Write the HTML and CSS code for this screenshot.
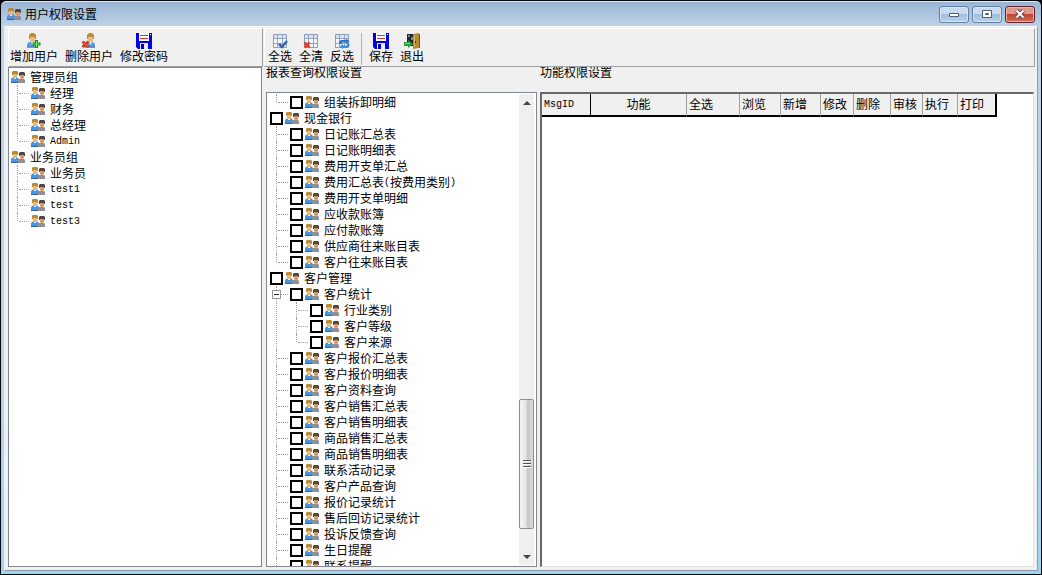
FILE: index.html
```html
<!DOCTYPE html>
<html lang="zh-CN">
<head>
<meta charset="utf-8">
<title>用户权限设置</title>
<link rel="stylesheet" href="styles.css">
</head>
<body>
<svg class="sprite" aria-hidden="true">
  <symbol id="users" viewBox="0 0 14 12">
    <path d="M0 11.500V8l1.500-1.500h5L8 8v3.500z" fill="#4c94dc"/>
    <path d="M0 11.500h7" stroke="#2b62b0"/>
    <path d="M3 7h2v1H3z" fill="#e8f2fc"/>
    <path d="M2 2h4v4L5 7H3L2 6z" fill="#e9b67c"/>
    <path d="M1 4V1l1-1h4l1 1v3H6V3H2v1z" fill="#b88a34"/>
    <path d="M7 12V9l1-1h5l1 1v3z" fill="#909094"/>
    <path d="M10 8h1v2h-1z" fill="#e07848"/>
    <path d="M9 4h4v3l-1 1h-2L9 7z" fill="#d89868"/>
    <path d="M8 5V2l1-1h4l1 1v3h-1V4H9v1z" fill="#54463e"/>
  </symbol>
  <symbol id="person" viewBox="0 0 16 16">
    <path d="M1 14v-3l2-2h6l2 2v3.500H1.500z" fill="#5c9fdf"/>
    <path d="M1 14h10" stroke="#3a6fb8"/>
    <path d="M5 9h3l-1.500 3z" fill="#e4f0fb"/>
    <path d="M4 3h5v5L8 9H5L4 8z" fill="#eab987"/>
    <path d="M3 6V2l2-2h3l2 2v4H9V4H4v2z" fill="#bd8c34"/>
  </symbol>
  <symbol id="user-add" viewBox="0 0 16 16">
    <use href="#person"/>
    <path d="M9 7h3v2.500h2.500v3H12V15H9v-2.500H6.500v-3H9z" fill="#168a1c"/>
    <path d="M10 8h1v2.500h2.500v1H11V14h-1v-2.500H7.500v-1H10z" fill="#74ee54"/>
  </symbol>
  <symbol id="user-del" viewBox="0 0 16 16">
    <use href="#person" x="3"/>
    <path d="M1.500 8.500l6 5.500M7.500 8.500L1.500 14" stroke="#cc3a26" stroke-width="3"/>
    <path d="M2 9l5 4.500" stroke="#ec6a54"/>
  </symbol>
  <symbol id="disk" viewBox="0 0 16 16">
    <path d="M0 0h16v16H2l-2-2z" fill="#0000e4"/>
    <path d="M3 0h10v8H3z" fill="#fff"/>
    <path d="M4 2.500h8M4 5.500h8" stroke="#e03030"/>
    <path d="M4 10h8v6H4z" fill="#e8e8f4"/>
    <path d="M5 11h3v5H5z" fill="#0000b4"/>
    <path d="M14 1h1v1h-1z" fill="#fff"/>
  </symbol>
  <symbol id="sheet" viewBox="0 0 16 16">
    <path d="M1.500 1.500h13v13h-13z" fill="#f4f7fc" stroke="#8d9cba"/>
    <path d="M2 2h12v3H2z" fill="#d9e2f1"/>
    <path d="M5.500 1v14M10.500 1v14M1 5.500h14M1 10.500h14" stroke="#98a2bc"/>
  </symbol>
  <symbol id="sheet-check" viewBox="0 0 16 16">
    <use href="#sheet"/>
    <path d="M7 11l3 3 5-6" fill="none" stroke="#2f66b0" stroke-width="2.500"/>
  </symbol>
  <symbol id="sheet-clear" viewBox="0 0 16 16">
    <use href="#sheet"/>
    <path d="M1.500 9.500l5 5M6.500 9.500l-5 5" stroke="#dc3c28" stroke-width="2.500"/>
  </symbol>
  <symbol id="sheet-invert" viewBox="0 0 16 16">
    <use href="#sheet"/>
    <path d="M5 11V8.500L7 7h5V5.500l3.500 3L12 11V9.500H8V11z" fill="#2878d0"/>
    <path d="M15.500 10.500V13L13.500 15H9v1l-3.500-2.500L9 11v1.500h4v-2z" fill="#3b8ee2"/>
  </symbol>
  <symbol id="exit" viewBox="0 0 16 16">
    <path d="M3 1h7v12H3z" fill="#20242c"/>
    <path d="M4 2h2v2H4zM7 4h2v3H7z" fill="#7a86a8"/>
    <path d="M9 1l6-1v15l-6 1z" fill="#b5892c"/>
    <path d="M10.500 2v12" stroke="#dcb65c"/>
    <path d="M15.500 1v14" stroke="#76520e"/>
    <path d="M11 8h1v2h-1z" fill="#523808"/>
    <path d="M0 9h4V7l5 4-5 4v-2H0z" fill="#2d9c38"/>
    <path d="M1 10.500h5" stroke="#83d07e"/>
  </symbol>
</svg>

<div class="window">
  <header class="titlebar">
    <svg class="icon-users"><use href="#users"/></svg>
    <h1 class="title">用户权限设置</h1>
    <button class="winbtn" aria-label="最小化"><svg class="winglyph" viewBox="0 0 12 10"><path d="M1.500 4.500h9v3h-9z" fill="#fff" stroke="#4f5f74"/></svg></button>
    <button class="winbtn" aria-label="最大化"><svg class="winglyph" viewBox="0 0 12 10"><path d="M1.500 1.500h9v7h-9z" fill="#fff" stroke="#4f5f74"/><path d="M4.500 4.500h3v1h-3z" fill="#9db4d0" stroke="#4f5f74"/></svg></button>
    <button class="winbtn winbtn-close" aria-label="关闭"><svg class="winglyph" viewBox="0 0 12 10"><path d="M2.500 1.500l7 7M9.500 1.500l-7 7" stroke="#5c3c44" stroke-width="4"/><path d="M2.500 1.500l7 7M9.500 1.500l-7 7" stroke="#fff" stroke-width="2"/></svg></button>
  </header>

  <main class="client">
    <section class="side">
      <div class="toolbar" role="toolbar">
        <button class="tool"><svg class="icon-tool"><use href="#user-add"/></svg>增加用户</button>
        <button class="tool"><svg class="icon-tool"><use href="#user-del"/></svg>删除用户</button>
        <button class="tool"><svg class="icon-tool"><use href="#disk"/></svg>修改密码</button>
      </div>
      <div class="box">
        <ul class="tree user-tree">
          <li><div class="row"><svg class="icon-users"><use href="#users"/></svg>管理员组</div>
            <ul class="branch">
              <li><div class="row"><svg class="icon-users"><use href="#users"/></svg>经理</div></li>
              <li><div class="row"><svg class="icon-users"><use href="#users"/></svg>财务</div></li>
              <li><div class="row"><svg class="icon-users"><use href="#users"/></svg>总经理</div></li>
              <li class="last"><div class="row"><svg class="icon-users"><use href="#users"/></svg><span class="latin">Admin</span></div></li>
            </ul>
          </li>
          <li><div class="row"><svg class="icon-users"><use href="#users"/></svg>业务员组</div>
            <ul class="branch">
              <li><div class="row"><svg class="icon-users"><use href="#users"/></svg>业务员</div></li>
              <li><div class="row"><svg class="icon-users"><use href="#users"/></svg><span class="latin">test1</span></div></li>
              <li><div class="row"><svg class="icon-users"><use href="#users"/></svg><span class="latin">test</span></div></li>
              <li class="last"><div class="row"><svg class="icon-users"><use href="#users"/></svg><span class="latin">test3</span></div></li>
            </ul>
          </li>
        </ul>
      </div>
    </section>

    <section class="work">
      <div class="toolbar" role="toolbar">
        <button class="tool"><svg class="icon-tool"><use href="#sheet-check"/></svg>全选</button>
        <button class="tool"><svg class="icon-tool"><use href="#sheet-clear"/></svg>全清</button>
        <button class="tool"><svg class="icon-tool"><use href="#sheet-invert"/></svg>反选</button>
        <span class="divider"></span>
        <button class="tool"><svg class="icon-tool"><use href="#disk"/></svg>保存</button>
        <button class="tool"><svg class="icon-tool"><use href="#exit"/></svg>退出</button>
      </div>
      <div class="panes">
        <section class="pane">
          <h2 class="caption">报表查询权限设置</h2>
          <div class="box report-box">
            <ul class="tree check-tree">
              <li>
                <ul class="branch">
                  <li class="last"><label class="row"><input type="checkbox" class="check"><svg class="icon-users"><use href="#users"/></svg>组装拆卸明细</label></li>
                </ul>
              </li>
              <li><label class="row"><input type="checkbox" class="check"><svg class="icon-users"><use href="#users"/></svg>现金银行</label>
                <ul class="branch">
                  <li><label class="row"><input type="checkbox" class="check"><svg class="icon-users"><use href="#users"/></svg>日记账汇总表</label></li>
                  <li><label class="row"><input type="checkbox" class="check"><svg class="icon-users"><use href="#users"/></svg>日记账明细表</label></li>
                  <li><label class="row"><input type="checkbox" class="check"><svg class="icon-users"><use href="#users"/></svg>费用开支单汇总</label></li>
                  <li><label class="row"><input type="checkbox" class="check"><svg class="icon-users"><use href="#users"/></svg>费用汇总表<span class="latin">(</span>按费用类别<span class="latin">)</span></label></li>
                  <li><label class="row"><input type="checkbox" class="check"><svg class="icon-users"><use href="#users"/></svg>费用开支单明细</label></li>
                  <li><label class="row"><input type="checkbox" class="check"><svg class="icon-users"><use href="#users"/></svg>应收款账簿</label></li>
                  <li><label class="row"><input type="checkbox" class="check"><svg class="icon-users"><use href="#users"/></svg>应付款账簿</label></li>
                  <li><label class="row"><input type="checkbox" class="check"><svg class="icon-users"><use href="#users"/></svg>供应商往来账目表</label></li>
                  <li class="last"><label class="row"><input type="checkbox" class="check"><svg class="icon-users"><use href="#users"/></svg>客户往来账目表</label></li>
                </ul>
              </li>
              <li><label class="row"><input type="checkbox" class="check"><svg class="icon-users"><use href="#users"/></svg>客户管理</label>
                <ul class="branch">
                  <li><button class="expander" aria-label="折叠" aria-expanded="true"></button><label class="row"><input type="checkbox" class="check"><svg class="icon-users"><use href="#users"/></svg>客户统计</label>
                    <ul class="branch">
                      <li><label class="row"><input type="checkbox" class="check"><svg class="icon-users"><use href="#users"/></svg>行业类别</label></li>
                      <li><label class="row"><input type="checkbox" class="check"><svg class="icon-users"><use href="#users"/></svg>客户等级</label></li>
                      <li class="last"><label class="row"><input type="checkbox" class="check"><svg class="icon-users"><use href="#users"/></svg>客户来源</label></li>
                    </ul>
                  </li>
                  <li><label class="row"><input type="checkbox" class="check"><svg class="icon-users"><use href="#users"/></svg>客户报价汇总表</label></li>
                  <li><label class="row"><input type="checkbox" class="check"><svg class="icon-users"><use href="#users"/></svg>客户报价明细表</label></li>
                  <li><label class="row"><input type="checkbox" class="check"><svg class="icon-users"><use href="#users"/></svg>客户资料查询</label></li>
                  <li><label class="row"><input type="checkbox" class="check"><svg class="icon-users"><use href="#users"/></svg>客户销售汇总表</label></li>
                  <li><label class="row"><input type="checkbox" class="check"><svg class="icon-users"><use href="#users"/></svg>客户销售明细表</label></li>
                  <li><label class="row"><input type="checkbox" class="check"><svg class="icon-users"><use href="#users"/></svg>商品销售汇总表</label></li>
                  <li><label class="row"><input type="checkbox" class="check"><svg class="icon-users"><use href="#users"/></svg>商品销售明细表</label></li>
                  <li><label class="row"><input type="checkbox" class="check"><svg class="icon-users"><use href="#users"/></svg>联系活动记录</label></li>
                  <li><label class="row"><input type="checkbox" class="check"><svg class="icon-users"><use href="#users"/></svg>客户产品查询</label></li>
                  <li><label class="row"><input type="checkbox" class="check"><svg class="icon-users"><use href="#users"/></svg>报价记录统计</label></li>
                  <li><label class="row"><input type="checkbox" class="check"><svg class="icon-users"><use href="#users"/></svg>售后回访记录统计</label></li>
                  <li><label class="row"><input type="checkbox" class="check"><svg class="icon-users"><use href="#users"/></svg>投诉反馈查询</label></li>
                  <li><label class="row"><input type="checkbox" class="check"><svg class="icon-users"><use href="#users"/></svg>生日提醒</label></li>
                  <li><label class="row"><input type="checkbox" class="check"><svg class="icon-users"><use href="#users"/></svg>联系提醒</label></li>
                </ul>
              </li>
            </ul>
            <div class="scrollbar">
              <button class="arrow" aria-label="向上滚动"><svg class="arrow-glyph" viewBox="0 0 8 4"><path d="M0 4l4-4 4 4z"/></svg></button>
              <div class="track-before"></div>
              <div class="thumb"><svg class="grip" viewBox="0 0 8 9"><path d="M0 .5h8M0 3.500h8M0 6.500h8" stroke="#555"/><path d="M0 1.500h8M0 4.500h8M0 7.500h8" stroke="#fff"/></svg></div>
              <div class="track-after"></div>
              <button class="arrow" aria-label="向下滚动"><svg class="arrow-glyph" viewBox="0 0 8 4"><path d="M0 0l4 4 4-4z"/></svg></button>
            </div>
          </div>
        </section>
        <section class="pane">
          <h2 class="caption">功能权限设置</h2>
          <div class="grid-box">
            <table class="grid">
              <colgroup><col class="c49"><col class="c96"><col class="c53"><col class="c41"><col class="c40"><col class="c33"><col class="c37"><col class="c32"><col class="c35"><col class="c39"></colgroup>
              <thead>
                <tr><th class="fixed"><span class="latin">MsgID</span></th><th class="center">功能</th><th>全选</th><th>浏览</th><th>新增</th><th>修改</th><th>删除</th><th>审核</th><th>执行</th><th class="end">打印</th></tr>
              </thead>
            </table>
          </div>
        </section>
      </div>
    </section>
  </main>
</div>
</body>
</html>
```
FILE: styles.css
```css
* {
  box-sizing: border-box;
}

body {
  margin: 0;
  background: #05070a;
  color: #000;
  font: 12px/16px "Noto Sans CJK SC", sans-serif;
}

button {
  margin: 0;
  padding: 0;
  border: 0;
  background: none;
  color: inherit;
  font: inherit;
}

h1,
h2 {
  margin: 0;
  font-size: 12px;
  font-weight: normal;
}

ul {
  margin: 0;
  padding: 0;
  list-style: none;
}

svg {
  display: block;
  flex: none;
}

.sprite {
  position: absolute;
  width: 0;
  height: 0;
}

.latin {
  padding-top: 2px;
  font: 10px/16px "Liberation Mono", monospace;
}

/* Window frame */
.window {
  display: flex;
  flex-direction: column;
  height: 100vh;
  padding: 0 3px 3px;
  border: 1px solid #05070a;
  border-radius: 6px 6px 0 0;
  background: linear-gradient(#98b4d3, #bed2e9 25px, #b9d1ea 70%, #9bd5f0);
  box-shadow: inset 0 1px #dcebf8;
}

.titlebar {
  display: flex;
  align-items: center;
  gap: 3px;
  height: 25px;
  padding: 0 3px;
}

.title {
  flex: 1;
  padding-left: 1px;
}

.winbtn {
  display: grid;
  place-items: center;
  width: 30px;
  height: 17px;
  margin-top: 1px;
  border: 1px solid #62809f;
  border-radius: 3px;
  background: linear-gradient(#c9dbee 45%, #a1bddb 50%, #b9d2ec);
  box-shadow: inset 0 0 0 1px #d8e6f4;
}

.winbtn-close {
  border-color: #5d2430;
  background: linear-gradient(#dd9a8c 45%, #be4630 50%, #cf7258);
  box-shadow: inset 0 0 0 1px #e8b5a8;
}

.winglyph {
  width: 12px;
  height: 10px;
}

.client {
  flex: 1;
  display: grid;
  grid-template-columns: 255px minmax(0, 1fr);
  gap: 1px;
  min-height: 0;
  padding: 1px 2px 3px 3px;
  border: 1px solid #8f9ba6;
  border-top-color: #fff;
  border-left-color: #eaf1f9;
  background: #f0f0f0;
}

.side,
.work,
.pane {
  display: flex;
  flex-direction: column;
  min-width: 0;
  min-height: 0;
}

/* Toolbars */
.toolbar {
  display: flex;
  gap: 7px;
  height: 39px;
  padding: 4px 1px 0;
  border: 1px solid #a0a0a0;
  border-top-color: #fff;
  border-left-color: #fff;
}

.work .toolbar {
  padding-left: 3px;
}

.tool {
  display: flex;
  flex-direction: column;
  align-items: center;
  line-height: 14px;
}

.icon-tool {
  width: 16px;
  height: 16px;
}

.divider {
  width: 1px;
  margin-bottom: 1px;
  background: #b4b4a8;
}

/* Trees */
.box {
  flex: 1;
  display: flex;
  min-height: 0;
  overflow: hidden;
  border: 1px solid #828790;
  background: #fff;
}

.side .box {
  margin-right: 1px;
}

.tree {
  flex: 1;
  padding: 1px 2px;
}

.row {
  display: flex;
  align-items: center;
  height: 16px;
  white-space: nowrap;
}

.icon-users {
  width: 14px;
  height: 12px;
}

.row .icon-users {
  margin-right: 5px;
}

.check {
  appearance: none;
  flex: none;
  width: 13px;
  height: 13px;
  margin: 0 2px 0 0;
  border: 2px solid #000;
  background: #fff;
}

.check-tree {
  padding-left: 3px;
}

.branch li {
  position: relative;
  padding-left: 20px;
}

.branch li::before {
  content: "";
  position: absolute;
  top: 0;
  bottom: 0;
  left: 6px;
  border-left: 1px dotted #a0a0a0;
}

.branch .last::before {
  bottom: auto;
  height: 8px;
}

.branch li::after {
  content: "";
  position: absolute;
  top: 8px;
  left: 8px;
  width: 10px;
  border-top: 1px dotted #a0a0a0;
}

.expander {
  position: absolute;
  z-index: 1;
  top: 4px;
  left: 2px;
  width: 9px;
  height: 9px;
  border: 1px solid #989898;
  background: linear-gradient(#222, #222) center / 5px 1px no-repeat #fff;
}

/* Scrollbar */
.scrollbar {
  display: flex;
  flex-direction: column;
  width: 15px;
  margin: 1px 2px 1px 0;
  background: #efefef;
}

.arrow {
  display: grid;
  place-items: center;
  height: 17px;
}

.arrow-glyph {
  width: 8px;
  height: 4px;
  fill: #444;
}

.track-before {
  flex: 290;
}

.thumb {
  flex: 129;
  display: grid;
  place-items: center;
  border: 1px solid #8c8c8c;
  border-radius: 2px;
  background: linear-gradient(90deg, #f5f5f5, #e6e6e6 45%, #c6c6ca 60%, #dcdcde);
}

.track-after {
  flex: 19;
}

.grip {
  width: 8px;
  height: 9px;
}

/* Permission panes */
.panes {
  flex: 1;
  display: grid;
  grid-template-columns: 271px minmax(0, 1fr);
  gap: 3px;
  min-height: 0;
  padding: 0 1px 0 2px;
}

.caption {
  flex: none;
  height: 25px;
  overflow: hidden;
  line-height: 10px;
}

.grid-box {
  flex: 1;
  min-height: 0;
  border-top: 2px solid #696969;
  border-left: 2px solid #696969;
  border-right: 1px solid #e3e3e3;
  border-bottom: 1px solid #e3e3e3;
  background: #fff;
}

.grid {
  table-layout: fixed;
  width: 455px;
  border-collapse: separate;
  border-spacing: 0;
}

.grid th {
  height: 20px;
  padding: 0 0 2px 2px;
  border-right: 1px solid #a0a0a0;
  border-bottom: 2px solid #000;
  background: #f0f0f0;
  font-weight: normal;
  line-height: 16px;
  text-align: left;
  white-space: nowrap;
}

.grid .fixed {
  border-right-color: #000;
}

.grid .center {
  padding-left: 0;
  text-align: center;
}

.grid .end {
  border-right: 2px solid #000;
}

.c49 { width: 49px; }
.c96 { width: 96px; }
.c53 { width: 53px; }
.c41 { width: 41px; }
.c40 { width: 40px; }
.c33 { width: 33px; }
.c37 { width: 37px; }
.c32 { width: 32px; }
.c35 { width: 35px; }
.c39 { width: 39px; }
```
